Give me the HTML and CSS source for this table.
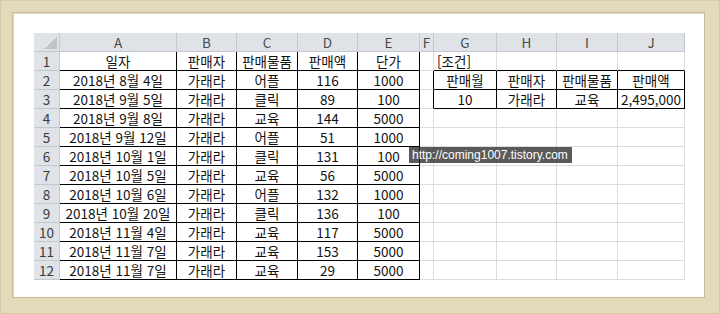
FILE: index.html
```html
<!DOCTYPE html>
<html lang="ko">
<head>
<meta charset="utf-8">
<link rel="stylesheet" href="styles.css">
</head>
<body>
<div class="frame">
  <div class="paper">
    <div class="sheet">
      <div class="c corner"></div><div class="c h">A</div><div class="c h">B</div><div class="c h">C</div><div class="c h">D</div><div class="c h">E</div><div class="c h">F</div><div class="c h">G</div><div class="c h">H</div><div class="c h">I</div><div class="c h">J</div>

      <div class="c r">1</div><div class="c br bb">일자</div><div class="c br bb">판매자</div><div class="c br bb">판매물품</div><div class="c br bb">판매액</div><div class="c br bb">단가</div><div class="c"></div><div class="c bb left">[조건]</div><div class="c bb"></div><div class="c bb"></div><div class="c bb"></div>

      <div class="c r">2</div><div class="c br bb">2018년 8월 4일</div><div class="c br bb">가래라</div><div class="c br bb">어플</div><div class="c br bb">116</div><div class="c br bb">1000</div><div class="c br"></div><div class="c br bb">판매월</div><div class="c br bb">판매자</div><div class="c br bb">판매물품</div><div class="c br bb">판매액</div>

      <div class="c r">3</div><div class="c br bb">2018년 9월 5일</div><div class="c br bb">가래라</div><div class="c br bb">클릭</div><div class="c br bb">89</div><div class="c br bb">100</div><div class="c br"></div><div class="c br bb">10</div><div class="c br bb">가래라</div><div class="c br bb">교육</div><div class="c br bb">2,495,000</div>

      <div class="c r">4</div><div class="c br bb">2018년 9월 8일</div><div class="c br bb">가래라</div><div class="c br bb">교육</div><div class="c br bb">144</div><div class="c br bb">5000</div><div class="c"></div><div class="c"></div><div class="c"></div><div class="c"></div><div class="c"></div>

      <div class="c r">5</div><div class="c br bb">2018년 9월 12일</div><div class="c br bb">가래라</div><div class="c br bb">어플</div><div class="c br bb">51</div><div class="c br bb">1000</div><div class="c"></div><div class="c"></div><div class="c"></div><div class="c"></div><div class="c"></div>

      <div class="c r">6</div><div class="c br bb">2018년 10월 1일</div><div class="c br bb">가래라</div><div class="c br bb">클릭</div><div class="c br bb">131</div><div class="c br bb">100</div><div class="c"></div><div class="c"></div><div class="c"></div><div class="c"></div><div class="c"></div>

      <div class="c r">7</div><div class="c br bb">2018년 10월 5일</div><div class="c br bb">가래라</div><div class="c br bb">교육</div><div class="c br bb">56</div><div class="c br bb">5000</div><div class="c"></div><div class="c"></div><div class="c"></div><div class="c"></div><div class="c"></div>

      <div class="c r">8</div><div class="c br bb">2018년 10월 6일</div><div class="c br bb">가래라</div><div class="c br bb">어플</div><div class="c br bb">132</div><div class="c br bb">1000</div><div class="c"></div><div class="c"></div><div class="c"></div><div class="c"></div><div class="c"></div>

      <div class="c r">9</div><div class="c br bb">2018년 10월 20일</div><div class="c br bb">가래라</div><div class="c br bb">클릭</div><div class="c br bb">136</div><div class="c br bb">100</div><div class="c"></div><div class="c"></div><div class="c"></div><div class="c"></div><div class="c"></div>

      <div class="c r">10</div><div class="c br bb">2018년 11월 4일</div><div class="c br bb">가래라</div><div class="c br bb">교육</div><div class="c br bb">117</div><div class="c br bb">5000</div><div class="c"></div><div class="c"></div><div class="c"></div><div class="c"></div><div class="c"></div>

      <div class="c r">11</div><div class="c br bb">2018년 11월 7일</div><div class="c br bb">가래라</div><div class="c br bb">교육</div><div class="c br bb">153</div><div class="c br bb">5000</div><div class="c"></div><div class="c"></div><div class="c"></div><div class="c"></div><div class="c"></div>

      <div class="c r">12</div><div class="c br bb">2018년 11월 7일</div><div class="c br bb">가래라</div><div class="c br bb">교육</div><div class="c br bb">29</div><div class="c br bb">5000</div><div class="c"></div><div class="c"></div><div class="c"></div><div class="c"></div><div class="c"></div>
    </div>
    <div class="tip">http://coming1007.tistory.com</div>
  </div>
</div>
</body>
</html>
```
FILE: styles.css
```css
* {
  box-sizing: border-box;
  margin: 0;
  padding: 0;
}

body {
  width: 720px;
  height: 314px;
  overflow: hidden;
  font-family: "Noto Sans CJK KR", sans-serif;
}

.frame {
  width: 720px;
  height: 314px;
  background: #e4dabb;
  padding: 13px 16px 17px 13px;
  box-shadow: inset 0 0 0 1px #d6cba6;
}

.paper {
  position: relative;
  height: 100%;
  background: #fff;
  padding: 20px 0 0 21px;
  box-shadow: 0 0 0 1px #c9bc94, inset 1px 1px 1px rgba(120, 100, 50, 0.25);
}

.sheet {
  display: grid;
  grid-template-columns: 26px 117px 60px 61px 60px 62px 14px 63px 60px 61px 67px;
  grid-auto-rows: 19px;
  width: max-content;
}

.c {
  border-right: 1px solid #dcdcdc;
  border-bottom: 1px solid #dcdcdc;
  font-size: 13.5px;
  line-height: 18px;
  text-align: center;
  color: #111;
  white-space: nowrap;
}

.h {
  background: #dfe3e8;
  color: #4a4a4a;
  border-color: #c3c8cf;
}

.r {
  background: #dfe3e8;
  color: #3a3a3a;
  border-color: #c3c8cf;
}

.corner {
  background:
    linear-gradient(135deg, transparent 50%, #bfc4cb 50%) right 2px bottom 2px / 13px 13px no-repeat,
    #dfe3e8;
  border-color: #c3c8cf;
}

.br {
  border-right-color: #000;
}

.bb {
  border-bottom-color: #000;
}

.left {
  text-align: left;
  padding-left: 3px;
}

.tip {
  position: absolute;
  left: 396px;
  top: 134px;
  width: 163px;
  height: 16px;
  background: rgba(35, 35, 35, 0.75);
  color: #fff;
  font: 12px/16px "Liberation Sans", sans-serif;
  padding-left: 3px;
}
```
